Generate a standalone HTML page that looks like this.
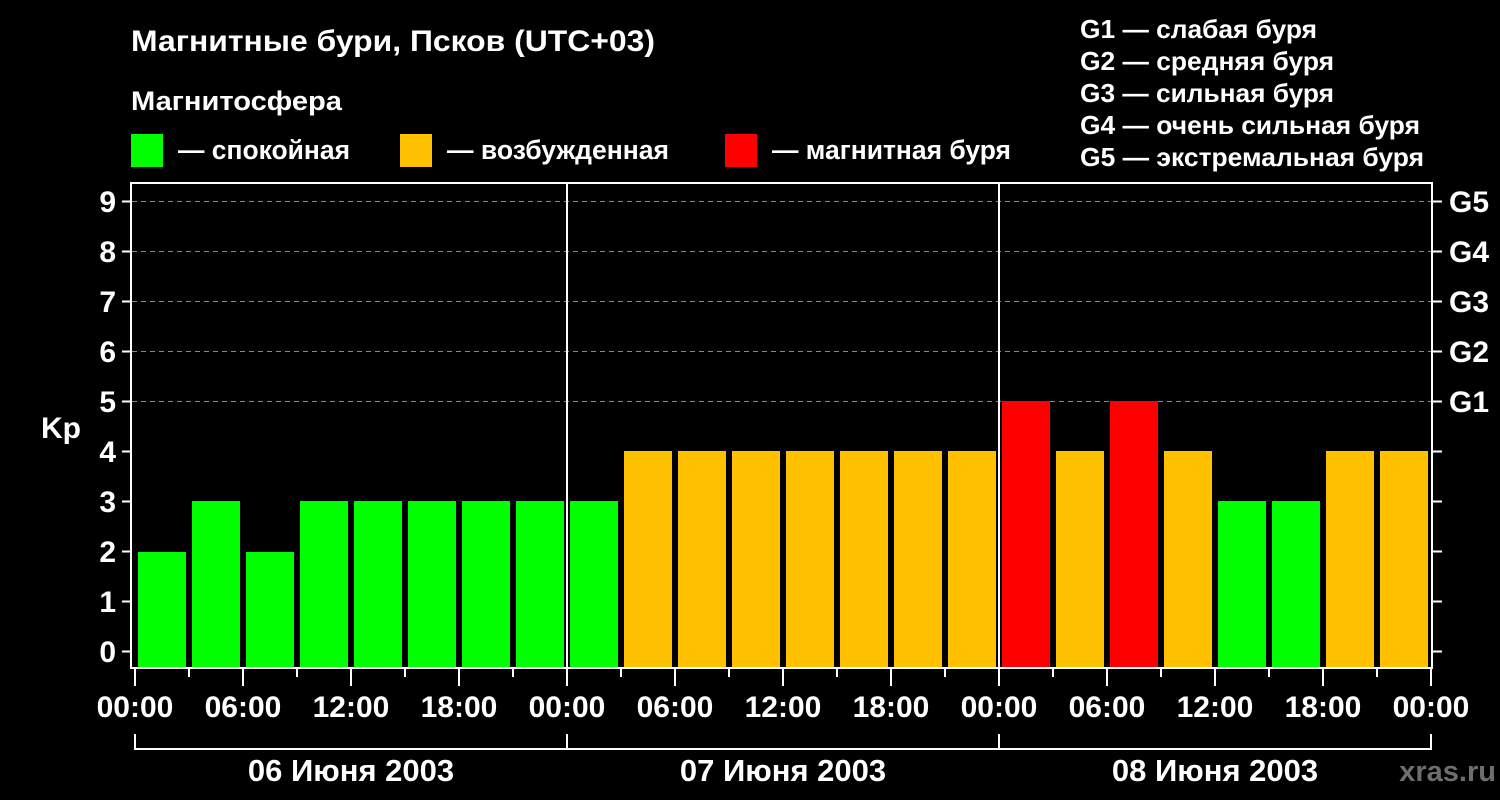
<!DOCTYPE html>
<html><head><meta charset="utf-8"><style>
html,body{margin:0;padding:0;background:#000;}
svg{display:block}
text{font-family:"Liberation Sans",Arial,sans-serif;font-weight:bold;fill:#fff}
</style></head><body>
<svg width="1500" height="800" viewBox="0 0 1500 800" xmlns="http://www.w3.org/2000/svg">
<rect width="1500" height="800" fill="#000"/>
<text x="131" y="51" font-size="30" textLength="524" lengthAdjust="spacingAndGlyphs">Магнитные бури, Псков (UTC+03)</text>
<text x="131" y="110" font-size="27" textLength="211" lengthAdjust="spacingAndGlyphs">Магнитосфера</text>
<rect x="131" y="134" width="32" height="33" fill="#00ff00"/>
<text x="178" y="159" font-size="27" textLength="172" lengthAdjust="spacingAndGlyphs">— спокойная</text>
<rect x="400" y="134" width="32" height="33" fill="#ffc000"/>
<text x="447" y="159" font-size="27" textLength="222" lengthAdjust="spacingAndGlyphs">— возбужденная</text>
<rect x="725" y="134" width="32" height="33" fill="#ff0000"/>
<text x="772" y="159" font-size="27" textLength="239" lengthAdjust="spacingAndGlyphs">— магнитная буря</text>
<g font-size="26">
<text x="1080" y="38" textLength="237" lengthAdjust="spacingAndGlyphs">G1 — слабая буря</text>
<text x="1080" y="70" textLength="254" lengthAdjust="spacingAndGlyphs">G2 — средняя буря</text>
<text x="1080" y="102" textLength="254" lengthAdjust="spacingAndGlyphs">G3 — сильная буря</text>
<text x="1080" y="134" textLength="340" lengthAdjust="spacingAndGlyphs">G4 — очень сильная буря</text>
<text x="1080" y="166" textLength="344" lengthAdjust="spacingAndGlyphs">G5 — экстремальная буря</text>
</g>
<g stroke="#888" stroke-width="1" stroke-dasharray="5,4">
<line x1="132" y1="201.5" x2="1431" y2="201.5"/>
<line x1="132" y1="251.5" x2="1431" y2="251.5"/>
<line x1="132" y1="301.5" x2="1431" y2="301.5"/>
<line x1="132" y1="351.5" x2="1431" y2="351.5"/>
<line x1="132" y1="401.5" x2="1431" y2="401.5"/>
</g>
<g>
<rect x="138" y="552" width="48" height="115" fill="#00ff00"/>
<rect x="192" y="501" width="48" height="166" fill="#00ff00"/>
<rect x="246" y="552" width="48" height="115" fill="#00ff00"/>
<rect x="300" y="501" width="48" height="166" fill="#00ff00"/>
<rect x="354" y="501" width="48" height="166" fill="#00ff00"/>
<rect x="408" y="501" width="48" height="166" fill="#00ff00"/>
<rect x="462" y="501" width="48" height="166" fill="#00ff00"/>
<rect x="516" y="501" width="48" height="166" fill="#00ff00"/>
<rect x="570" y="501" width="48" height="166" fill="#00ff00"/>
<rect x="624" y="451" width="48" height="216" fill="#ffc000"/>
<rect x="678" y="451" width="48" height="216" fill="#ffc000"/>
<rect x="732" y="451" width="48" height="216" fill="#ffc000"/>
<rect x="786" y="451" width="48" height="216" fill="#ffc000"/>
<rect x="840" y="451" width="48" height="216" fill="#ffc000"/>
<rect x="894" y="451" width="48" height="216" fill="#ffc000"/>
<rect x="948" y="451" width="48" height="216" fill="#ffc000"/>
<rect x="1002" y="401" width="48" height="266" fill="#ff0000"/>
<rect x="1056" y="451" width="48" height="216" fill="#ffc000"/>
<rect x="1110" y="401" width="48" height="266" fill="#ff0000"/>
<rect x="1164" y="451" width="48" height="216" fill="#ffc000"/>
<rect x="1218" y="501" width="48" height="166" fill="#00ff00"/>
<rect x="1272" y="501" width="48" height="166" fill="#00ff00"/>
<rect x="1326" y="451" width="48" height="216" fill="#ffc000"/>
<rect x="1380" y="451" width="48" height="216" fill="#ffc000"/>
</g>
<g stroke="#fff" stroke-width="2" fill="none">
<polyline points="131,668 131,183 1432,183 1432,668"/>
<line x1="130" y1="668" x2="1433" y2="668"/>
<line x1="567" y1="183" x2="567" y2="668"/>
<line x1="999" y1="183" x2="999" y2="668"/>
</g>
<g stroke="#fff" stroke-width="2">
<line x1="122" y1="201.5" x2="131" y2="201.5"/><line x1="122" y1="251.5" x2="131" y2="251.5"/>
<line x1="122" y1="301.5" x2="131" y2="301.5"/><line x1="122" y1="351.5" x2="131" y2="351.5"/>
<line x1="122" y1="401.5" x2="131" y2="401.5"/><line x1="122" y1="451.5" x2="131" y2="451.5"/>
<line x1="122" y1="501.5" x2="131" y2="501.5"/><line x1="122" y1="551.5" x2="131" y2="551.5"/>
<line x1="122" y1="601.5" x2="131" y2="601.5"/><line x1="122" y1="651.5" x2="131" y2="651.5"/>
<line x1="1432" y1="201.5" x2="1442" y2="201.5"/><line x1="1432" y1="251.5" x2="1442" y2="251.5"/>
<line x1="1432" y1="301.5" x2="1442" y2="301.5"/><line x1="1432" y1="351.5" x2="1442" y2="351.5"/>
<line x1="1432" y1="401.5" x2="1442" y2="401.5"/><line x1="1432" y1="451.5" x2="1442" y2="451.5"/>
<line x1="1432" y1="501.5" x2="1442" y2="501.5"/><line x1="1432" y1="551.5" x2="1442" y2="551.5"/>
<line x1="1432" y1="601.5" x2="1442" y2="601.5"/><line x1="1432" y1="651.5" x2="1442" y2="651.5"/>
</g>
<g font-size="30" text-anchor="end">
<text x="116" y="212">9</text><text x="116" y="262">8</text><text x="116" y="312">7</text>
<text x="116" y="362">6</text><text x="116" y="412">5</text><text x="116" y="462">4</text>
<text x="116" y="512">3</text><text x="116" y="562">2</text><text x="116" y="612">1</text>
<text x="116" y="662">0</text>
</g>
<text x="41" y="438" font-size="30">Kp</text>
<g font-size="30">
<text x="1449" y="212">G5</text><text x="1449" y="262">G4</text><text x="1449" y="312">G3</text>
<text x="1449" y="362">G2</text><text x="1449" y="412">G1</text>
</g>
<g stroke="#fff" stroke-width="2">
<line x1="135" y1="668" x2="135" y2="686"/><line x1="189" y1="668" x2="189" y2="677"/>
<line x1="243" y1="668" x2="243" y2="686"/><line x1="297" y1="668" x2="297" y2="677"/>
<line x1="351" y1="668" x2="351" y2="686"/><line x1="405" y1="668" x2="405" y2="677"/>
<line x1="459" y1="668" x2="459" y2="686"/><line x1="513" y1="668" x2="513" y2="677"/>
<line x1="567" y1="668" x2="567" y2="686"/><line x1="621" y1="668" x2="621" y2="677"/>
<line x1="675" y1="668" x2="675" y2="686"/><line x1="729" y1="668" x2="729" y2="677"/>
<line x1="783" y1="668" x2="783" y2="686"/><line x1="837" y1="668" x2="837" y2="677"/>
<line x1="891" y1="668" x2="891" y2="686"/><line x1="945" y1="668" x2="945" y2="677"/>
<line x1="999" y1="668" x2="999" y2="686"/><line x1="1053" y1="668" x2="1053" y2="677"/>
<line x1="1107" y1="668" x2="1107" y2="686"/><line x1="1161" y1="668" x2="1161" y2="677"/>
<line x1="1215" y1="668" x2="1215" y2="686"/><line x1="1269" y1="668" x2="1269" y2="677"/>
<line x1="1323" y1="668" x2="1323" y2="686"/><line x1="1377" y1="668" x2="1377" y2="677"/>
<line x1="1431" y1="668" x2="1431" y2="686"/>
</g>
<g font-size="30" text-anchor="middle">
<text x="135" y="717">00:00</text><text x="243" y="717">06:00</text><text x="351" y="717">12:00</text><text x="459" y="717">18:00</text>
<text x="567" y="717">00:00</text><text x="675" y="717">06:00</text><text x="783" y="717">12:00</text><text x="891" y="717">18:00</text>
<text x="999" y="717">00:00</text><text x="1107" y="717">06:00</text><text x="1215" y="717">12:00</text><text x="1323" y="717">18:00</text>
<text x="1431" y="717">00:00</text>
</g>
<g stroke="#fff" stroke-width="2" fill="none">
<polyline points="135,734 135,749 1431,749 1431,734"/>
<line x1="567" y1="734" x2="567" y2="749"/>
<line x1="999" y1="734" x2="999" y2="749"/>
</g>
<g font-size="31" text-anchor="middle">
<text x="351" y="781">06 Июня 2003</text>
<text x="783" y="781">07 Июня 2003</text>
<text x="1215" y="781">08 Июня 2003</text>
</g>
<text x="1496" y="781" font-size="29" text-anchor="end" style="fill:#6e6e6e">xras.ru</text>
</svg>
</body></html>
